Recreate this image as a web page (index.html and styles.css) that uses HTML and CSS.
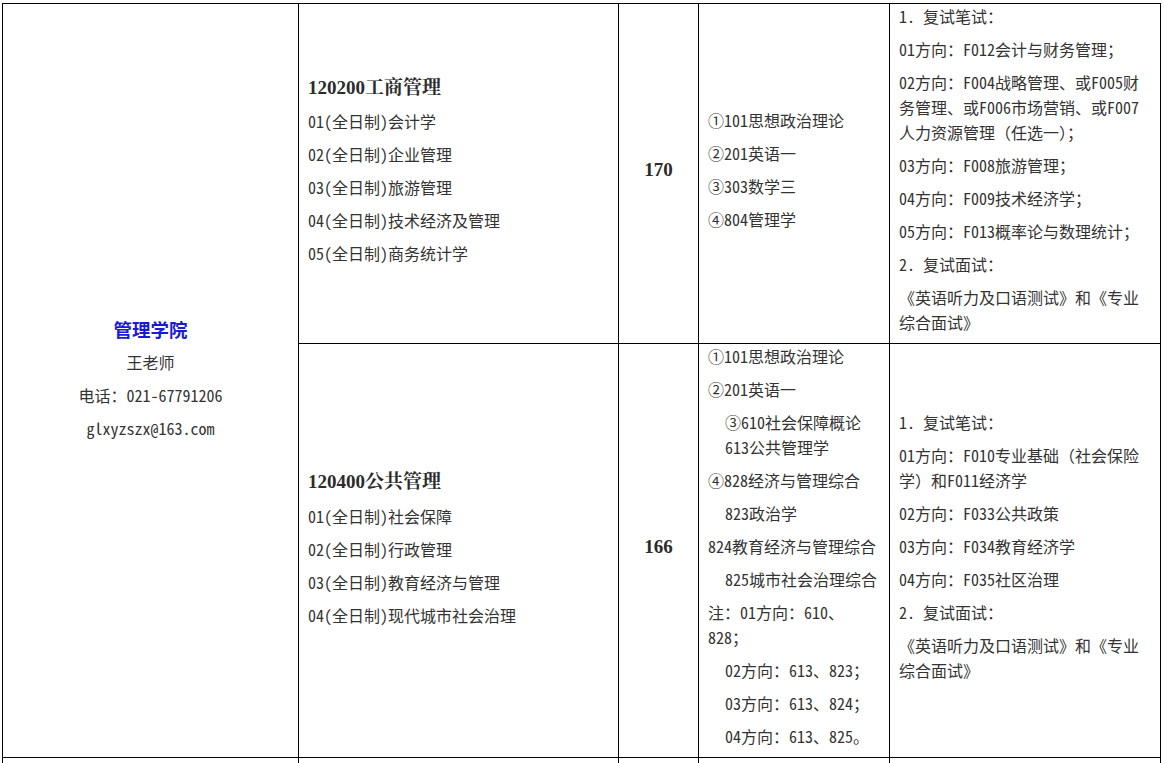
FILE: index.html
```html
<!DOCTYPE html>
<html lang="zh-CN">
<head>
<meta charset="utf-8">
<title>管理学院</title>
<link rel="stylesheet" href="styles.css">
</head>
<body>
<table class="grid">
  <colgroup>
    <col class="c1"><col class="c2"><col class="c3"><col class="c4"><col class="c5">
  </colgroup>
  <tr class="r1">
    <td rowspan="2" class="school">
      <p class="sname">管理学院</p>
      <p>王老师</p>
      <p>电话：021-67791206</p>
      <p>glxyzszx@163.com</p>
    </td>
    <td class="major">
      <p class="mh">120200工商管理</p>
      <p>01(全日制)会计学</p>
      <p>02(全日制)企业管理</p>
      <p>03(全日制)旅游管理</p>
      <p>04(全日制)技术经济及管理</p>
      <p>05(全日制)商务统计学</p>
    </td>
    <td class="num"><p>170</p></td>
    <td class="subj">
      <p>①101思想政治理论</p>
      <p>②201英语一</p>
      <p>③303数学三</p>
      <p>④804管理学</p>
    </td>
    <td class="exam">
      <p>1. 复试笔试：</p>
      <p>01方向：F012会计与财务管理；</p>
      <p>02方向：F004战略管理、或F005财<br>务管理、或F006市场营销、或F007<br>人力资源管理（任选一）；</p>
      <p>03方向：F008旅游管理；</p>
      <p>04方向：F009技术经济学；</p>
      <p>05方向：F013概率论与数理统计；</p>
      <p>2. 复试面试：</p>
      <p>《英语听力及口语测试》和《专业<br>综合面试》</p>
    </td>
  </tr>
  <tr class="r2">
    <td class="major low">
      <p class="mh">120400公共管理</p>
      <p>01(全日制)社会保障</p>
      <p>02(全日制)行政管理</p>
      <p>03(全日制)教育经济与管理</p>
      <p>04(全日制)现代城市社会治理</p>
    </td>
    <td class="num"><p>166</p></td>
    <td class="subj">
      <p>①101思想政治理论</p>
      <p>②201英语一</p>
      <p class="ind">③610社会保障概论<br>613公共管理学</p>
      <p>④828经济与管理综合</p>
      <p class="ind">823政治学</p>
      <p>824教育经济与管理综合</p>
      <p class="ind">825城市社会治理综合</p>
      <p>注：01方向：610、<br>828；</p>
      <p class="ind">02方向：613、823；</p>
      <p class="ind">03方向：613、824；</p>
      <p class="ind">04方向：613、825。</p>
    </td>
    <td class="exam">
      <p>1. 复试笔试：</p>
      <p>01方向：F010专业基础（社会保险<br>学）和F011经济学</p>
      <p>02方向：F033公共政策</p>
      <p>03方向：F034教育经济学</p>
      <p>04方向：F035社区治理</p>
      <p>2. 复试面试：</p>
      <p>《英语听力及口语测试》和《专业<br>综合面试》</p>
    </td>
  </tr>
  <tr class="r3">
    <td></td><td></td><td></td><td></td><td></td>
  </tr>
</table>
</body>
</html>
```
FILE: styles.css
```css
html, body {
  margin: 0;
  padding: 0;
  background: #ffffff;
}

body {
  color: #333333;
  font-family: "Noto Sans Mono CJK SC", "Noto Sans CJK SC", "Liberation Mono", monospace;
  font-size: 16px;
}

.grid {
  border-collapse: collapse;
  table-layout: fixed;
  width: 1159px;
  margin: 3px 0 0 2px;
}

.c1 { width: 296px; }
.c2 { width: 320px; }
.c3 { width: 80px; }
.c4 { width: 191px; }
.c5 { width: 271px; }

.grid td {
  border: 1px solid #000000;
  padding: 0 9px;
  vertical-align: middle;
}

.grid p {
  margin: 0 0 8px;
  line-height: 25px;
  white-space: nowrap;
}

.grid td.school {
  text-align: center;
  padding-top: 4px;
}

.school .sname {
  font-family: "Noto Sans CJK SC", "Liberation Sans", sans-serif;
  font-weight: 700;
  font-size: 18.5px;
  color: #1a1ad6;
  line-height: 26px;
}

.major .mh {
  font-family: "Liberation Serif", "Noto Serif CJK SC", "Noto Sans CJK SC", serif;
  font-weight: 700;
  font-size: 19px;
  line-height: 27px;
  color: #2b2b2b;
}

.grid td.low {
  padding-top: 3px;
}

.low .mh {
  margin-bottom: 9px;
}

.num {
  text-align: center;
}

.num p {
  font-family: "Liberation Serif", serif;
  font-weight: 700;
  font-size: 19px;
  color: #2b2b2b;
}

.subj .ind {
  padding-left: 17px;
}

.r3 td {
  height: 20px;
}
```
